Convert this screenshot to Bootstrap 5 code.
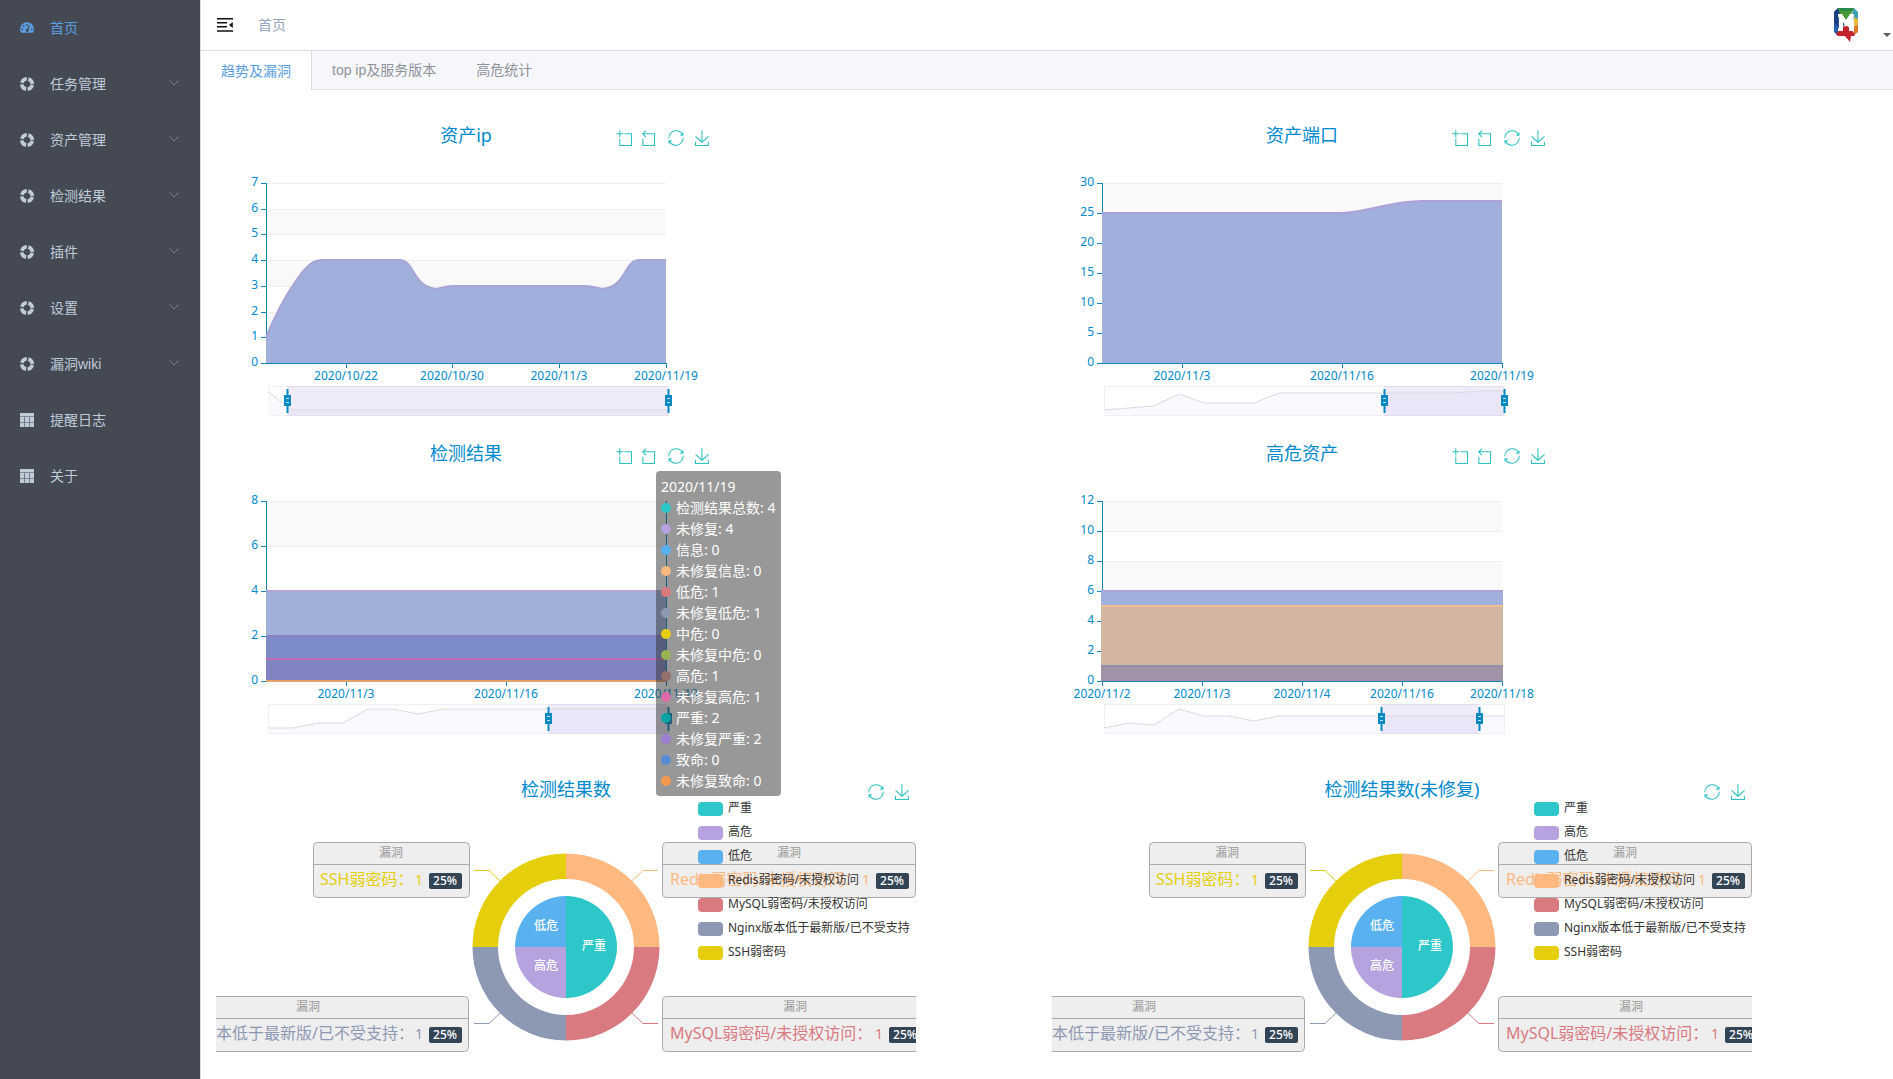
<!DOCTYPE html>
<html lang="zh-CN">
<head>
<meta charset="utf-8">
<meta name="viewport" content="width=device-width, initial-scale=1">
<title>首页</title>
<link href="https://cdn.jsdelivr.net/npm/bootstrap@5.3.0/dist/css/bootstrap.min.css" rel="stylesheet">
<style>
body{font-family:"Noto Sans","Noto Sans CJK SC",sans-serif;font-size:14px;line-height:20px;background:#fff}
.side,.tabbar,.crumb{font-family:"Liberation Sans","Noto Sans CJK SC",sans-serif}
.side{width:200px;background:#444953}
.side .nav-link{height:56px;padding:0 20px;color:#bfcbd9;gap:16px}
.side .nav-link.active{color:#5a9ee0}
.side .nav-link svg{width:14px;height:14px;flex:none}
.side .nav-link .chev{width:10px;height:6px;color:#7d828b;margin:0 1px 2px auto}
.main-col{border-left:1px solid #d8dce5;min-width:0}
.topbar{height:50px;padding:0 2px 0 16px}
.crumb{color:#97a8be;text-decoration:none;margin-left:25px}
.tabbar{height:40px;background:#f5f7fb;border-top:1px solid #d8dce5;border-bottom:1px solid #dfe4ed}
.tabbar button{border:0;background:none;padding:0 20px;color:#909399}
.tabbar .active{background:#fff;color:#5a9ee0;border-right:1px solid #d8dce5;height:39px}
.boards{padding:33px 5px 0 15px}
.board{max-width:500px;margin-bottom:18px}
.board-wide{max-width:700px}
.board-last{margin:18px 0 0}
.board-head{height:24px}
.board-head h2{font-size:18px;line-height:24px;color:#008acd;font-weight:400;margin:0}
.tools{flex:1 1 0;padding:7px 6px 0 0;gap:10px}
.tools button{border:0;background:none;padding:0;width:16px;height:16px;display:flex;color:#2ebfc0}
.tools svg{width:16px;height:16px}
.side-gap{flex:1 1 0;padding-left:6px}
.plot{display:block;width:100%;height:auto}
.plot text{font-size:12px}
.plot .axis{fill:#008acd}
.plot .big{font-size:16px}
.plot .num{font-size:14px}
.tip{left:440px;top:30px;width:125px;padding:5px;background:rgba(50,50,50,.5);color:#fff;line-height:21px;border-radius:4px;white-space:nowrap;z-index:5}
.tip i{display:inline-block;width:10px;height:10px;border-radius:50%;margin-right:5px}
.bg0{background:#2ec7c9}.bg1{background:#b6a2de}.bg2{background:#5ab1ef}.bg3{background:#ffb980}.bg4{background:#d87a80}.bg5{background:#8d98b3}.bg6{background:#e5cf0d}.bg7{background:#97b552}.bg8{background:#95706d}.bg9{background:#dc69aa}.bg10{background:#07a2a4}.bg11{background:#9a7fd1}.bg12{background:#588dd5}.bg13{background:#f5994e}
</style>
<script src="https://cdn.jsdelivr.net/npm/bootstrap@5.3.0/dist/js/bootstrap.bundle.min.js"></script>
</head>
<body>
<svg class="d-none" aria-hidden="true">
  <symbol id="i-gauge" viewBox="0 0 14 14"><path fill="currentColor" fill-rule="evenodd" d="M0 8.200a7 6.900 0 0 1 14 0c0 1.400-.4 2.600-1 3.600H1C.4 10.800 0 9.600 0 8.200zM6.200 2.900h1.600v1.500H6.200zM2.900 4.300h1.500v1.500H2.900zM1.500 7.600H3v1.500H1.500zM11 7.600h1.500v1.500H11zM9 4l1 .4-1.700 4a1.500 1.500 0 1 1-1.200-.4z"/></symbol>
  <symbol id="i-help" viewBox="0 0 14 14"><circle cx="7" cy="7" r="5.200" fill="none" stroke="currentColor" stroke-width="3.600" stroke-dasharray="6.570 1.600" stroke-dashoffset="-.8"/></symbol>
  <symbol id="i-table" viewBox="0 0 14 14"><path fill="currentColor" d="M0 0h14v3.400H0zM0 4h4.400v5H0zM5 4h4v5H5zM9.600 4H14v5H9.600zM0 9.500h4.400V14H0zM5 9.500h4V14H5zM9.600 9.500H14V14H9.600z"/></symbol>
  <symbol id="i-chev" viewBox="0 0 10 6"><path fill="none" stroke="currentColor" d="M.5.5 5 5 9.500.5"/></symbol>
  <symbol id="t-zoom" viewBox="-1 -1 61 61"><path d="M0,13.5h26.9 M13.5,26.9V0 M32.1,13.5H58V58H13.5 V32.1" fill="none" stroke="currentColor" stroke-width="4"/></symbol>
  <symbol id="t-back" viewBox="7 -1 61 61"><path d="M22,1.4L9.9,13.5l12.3,12.3 M10.3,13.5H54.9v44.6 H10.3v-26" fill="none" stroke="currentColor" stroke-width="4"/></symbol>
  <symbol id="t-restore" viewBox="-1 -1 62 62"><path d="M47,18.9h9.8V8.7 M56.3,20.1 C52.1,9,40.5,0.6,26.8,2.1C12.6,3.7,1.6,16.2,2.1,30.6 M13,41.1H3.1v10.2 M3.7,39.9c4.2,11.1,15.8,19.5,29.5,18 c14.2-1.6,25.2-14.1,24.7-28.5" fill="none" stroke="currentColor" stroke-width="4"/></symbol>
  <symbol id="t-save" viewBox="-1 -1 61 61"><path d="M4.7,22.9L29.3,45.5L54.7,23.4M4.6,43.6L4.6,58L53.8,58L53.8,43.6M29.2,45.1L29.2,0" fill="none" stroke="currentColor" stroke-width="4"/></symbol>
</svg>

<div class="d-flex min-vh-100">
  <nav class="side flex-shrink-0 nav flex-column flex-nowrap" aria-label="主菜单">
    <a href="#" class="nav-link active d-flex align-items-center"><svg><use href="#i-gauge"/></svg>首页</a>
    <a href="#" class="nav-link d-flex align-items-center"><svg><use href="#i-help"/></svg>任务管理<svg class="chev"><use href="#i-chev"/></svg></a>
    <a href="#" class="nav-link d-flex align-items-center"><svg><use href="#i-help"/></svg>资产管理<svg class="chev"><use href="#i-chev"/></svg></a>
    <a href="#" class="nav-link d-flex align-items-center"><svg><use href="#i-help"/></svg>检测结果<svg class="chev"><use href="#i-chev"/></svg></a>
    <a href="#" class="nav-link d-flex align-items-center"><svg><use href="#i-help"/></svg>插件<svg class="chev"><use href="#i-chev"/></svg></a>
    <a href="#" class="nav-link d-flex align-items-center"><svg><use href="#i-help"/></svg>设置<svg class="chev"><use href="#i-chev"/></svg></a>
    <a href="#" class="nav-link d-flex align-items-center"><svg><use href="#i-help"/></svg>漏洞wiki<svg class="chev"><use href="#i-chev"/></svg></a>
    <a href="#" class="nav-link d-flex align-items-center"><svg><use href="#i-table"/></svg>提醒日志</a>
    <a href="#" class="nav-link d-flex align-items-center"><svg><use href="#i-table"/></svg>关于</a>
  </nav>

  <div class="main-col flex-grow-1">
    <header class="topbar d-flex align-items-center">
      <button class="btn p-0 border-0 d-flex" aria-label="折叠菜单">
        <svg width="16" height="16" viewBox="0 0 16 16"><path fill="#111" d="M0 1h16v1.500H0zM0 5h10v1.500H0zM0 9h10v1.500H0zM0 13.300h16v1.500H0zM15.800 5v6L12 8z"/></svg>
      </button>
      <a class="crumb" href="#">首页</a>
      <button class="btn p-0 border-0 d-flex align-items-end ms-auto" aria-label="用户菜单">
        <svg width="26" height="34" viewBox="0 0 26 34">
          <path fill="#2a5fae" d="M5 0 1 4v20l4 4 8-14z"/>
          <path fill="#1d3f80" d="M1 4l4-4 2 7-2 2v9l-4-3z"/>
          <path fill="#4a9a34" d="M5 0h16l-3 6-5 7-6-7z"/>
          <path fill="#2c8a4a" d="M5 0h16l-1 3H7z"/>
          <path fill="#3c9fb5" d="M21 0l4 4v9l-4-1-2-7z"/>
          <path fill="#e6b93a" d="M21 9l4 2v8l-4 2z"/>
          <path fill="#e0762a" d="M21 19l4-2v7l-4 3z"/>
          <path fill="#c3232b" d="M3 26l4-5 6-4 6 5 3 5-1 1h-3l-1 6-5-6H5z"/>
          <path fill="#fff" d="M5 23v-3h1V9H5V6h4l4 6 4-6h4v3h-1v11h1v3h-5v-9l-3 5-3-5v9z"/>
        </svg>
        <svg class="ms-4" width="8" height="10" viewBox="0 0 8 10"><path fill="#5a5e66" d="M0 1h8L4 5z"/></svg>
      </button>
    </header>
    <div class="tabbar d-flex" role="tablist">
      <button class="active" role="tab" aria-selected="true">趋势及漏洞</button>
      <button role="tab">top ip及服务版本</button>
      <button role="tab">高危统计</button>
    </div>

    <main class="boards">
      <div class="row g-0">
        <section class="col-6"><div class="board" data-chart="ip"></div></section>
        <section class="col-6"><div class="board" data-chart="port"></div></section>
        <section class="col-6">
          <div class="board position-relative" data-chart="result">
            <div class="tip position-absolute" role="tooltip">2020/11/19<br>
              <i class="bg0"></i>检测结果总数: 4<br><i class="bg1"></i>未修复: 4<br><i class="bg2"></i>信息: 0<br><i class="bg3"></i>未修复信息: 0<br><i class="bg4"></i>低危: 1<br><i class="bg5"></i>未修复低危: 1<br><i class="bg6"></i>中危: 0<br><i class="bg7"></i>未修复中危: 0<br><i class="bg8"></i>高危: 1<br><i class="bg9"></i>未修复高危: 1<br><i class="bg10"></i>严重: 2<br><i class="bg11"></i>未修复严重: 2<br><i class="bg12"></i>致命: 0<br><i class="bg13"></i>未修复致命: 0
            </div>
          </div>
        </section>
        <section class="col-6"><div class="board" data-chart="asset"></div></section>
        <section class="col-6"><div class="board board-wide board-last" data-chart="pieAll"></div></section>
        <section class="col-6"><div class="board board-wide board-last" data-chart="pieOpen"></div></section>
      </div>
    </main>
  </div>
</div>

<script>
// Plot area of a trend chart: 400 x 180, inset 50 from the left and 60 from the top.
const trends = {
  ip: {title: '资产ip', max: 7, step: 1, ticks: [[80, '2020/10/22'], [186, '2020/10/30'], [293, '2020/11/3'], [400, '2020/11/19']],
    bands: [['M0,154.3 C0,154.3 13.3,122 26.7,102.9 C38,85 46,77.1 56,77.1 H133.3 C146.7,77.1 146.7,96.4 160,102.9 C173.3,109.3 173.3,102.9 186.7,102.9 H320 C333.3,102.9 333.3,109.3 346.7,102.9 C360,96.4 360,77.1 373.3,77.1 H400', '#a0afdb', '#a8a5d6']],
    zoom: [19, 400], shadow: '0,6 19,20 25,24 400,24'},
  port: {title: '资产端口', max: 30, step: 5, ticks: [[80, '2020/11/3'], [240, '2020/11/16'], [400, '2020/11/19']],
    bands: [['M0,30 H240 C265,29 290,18 320,18 H400', '#a0afdb', '#aea0d6']],
    zoom: [280, 400], shadow: '0,24 25,22 50,20 75,8 100,17 125,17 150,17 175,7 350,7 375,5 400,5'},
  result: {title: '检测结果', max: 8, step: 2, ticks: [[80, '2020/11/3'], [240, '2020/11/16'], [400, '2020/11/19']],
    bands: [['M0,90 H400', '#a0b0db', '#b1a3da'], ['M0,135 H400', '#7d8bc9', '#8b7dc2'], ['M0,158 H400', '#8084c0', '#c06bad'], ['M0,180 H400', '#8084c0', '#e0a068']],
    pointer: true, zoom: [280, 400], shadow: '0,24 25,24 50,19 75,19 100,5 125,5 150,10 175,5 400,5'},
  asset: {title: '高危资产', max: 12, step: 2, ticks: [[0, '2020/11/2'], [100, '2020/11/3'], [200, '2020/11/4'], [300, '2020/11/16'], [400, '2020/11/18']],
    bands: [['M-1,90 H401', '#a0afdb', '#a8a5d6'], ['M-1,105 H401', '#d2b6a1', '#f0bd92'], ['M-1,165 H401', '#a292a8', '#9090ae']],
    zoom: [277, 375], shadow: '0,24 25,19 50,21 75,5 100,12 125,12 150,17 175,12 400,12'}
};

const toolLabels = {zoom: '区域缩放', back: '区域缩放还原', restore: '还原', save: '保存为图片'};
const head = (title, tools) => `<div class="board-head d-flex align-items-start"><div class="side-gap"></div><h2>${title}</h2><div class="tools d-flex justify-content-end">${
  tools.map(t => `<button aria-label="${toolLabels[t]}"><svg><use href="#t-${t}"/></svg></button>`).join('')}</div></div>`;

function trendSvg(c) {
  let grid = '', labels = '', area = '', axis = '';
  const n = c.max / c.step, h = 180 / n;
  for (let i = 0; i <= n; i++) {
    const y = Math.round(180 - i * h);
    if (i < n && i % 2) grid += `<rect x="0" y="${180 - (i + 1) * h}" width="400" height="${h}" fill="#f9f9f9"/>`;
    if (i) grid += `<path d="M0,${y + .5}H400" stroke="#eee"/>`;
    axis += `<path d="M-5,${y + .5}H0"/>`;
    labels += `<text class="axis" x="-8" y="${y + 3}" text-anchor="end">${i * c.step}</text>`;
  }
  axis += '<path d="M.5,0V181"/><path d="M0,180.5H400"/>';
  c.bands.forEach(([d, fill, line]) => {
    area += `<path d="${d} V181 H${d.startsWith('M-1') ? -1 : 0}Z" fill="${fill}"/><path d="${d}" fill="none" stroke="${line}" stroke-width="2"/>`;
  });
  c.ticks.forEach(([x, t]) => {
    axis += `<path d="M${x + .5},180V185"/>`;
    labels += `<text class="axis" x="${x}" y="197" text-anchor="middle">${t}</text>`;
  });
  const [a, b] = c.zoom;
  const handle = x => `<g transform="translate(${x},0)"><path d="M.5,3V27" stroke="#0a88c0" stroke-width="2"/><rect x="-3" y="9" width="7" height="11" fill="#0a88c0"/><path d="M-1,12.5H2M-1,16.5H2" stroke="#bfe4f5"/></g>`;
  return `<svg class="plot" viewBox="0 24 500 276" role="img" aria-label="${c.title}"><g transform="translate(50,60)">
    ${grid}<g stroke="#1586b8">${axis}</g>${area}<path d="M0,180.5H400" stroke="${c.bands.length === 4 ? '#e0a068' : '#1586b8'}"/>
    ${c.pointer ? '<path d="M400.5,0V180" stroke="#008acd"/>' : ''}${labels}
    <g transform="translate(2,203)"><rect x=".5" y=".5" width="400" height="29" fill="#fff" stroke="#f0eef6"/>
    <polygon points="${c.shadow} 400,29 0,29" fill="#faf9fe"/><rect x="${a}" y="0" width="${b - a}" height="30" fill="#b6a2de" fill-opacity=".22"/>
    <polyline points="${c.shadow}" fill="none" stroke="#d9dae2"/>${handle(a)}${handle(b)}</g></g></svg>`;
}

function pieSvg(title) {
  const pt = (r, deg) => [350 + r * Math.sin(deg * Math.PI / 180), 170 - r * Math.cos(deg * Math.PI / 180)].join(',');
  const wedge = (r0, r1, a, b, f) => `<path fill="${f}" d="M${pt(r1, a)}A${r1},${r1} 0 0 1 ${pt(r1, b)}L${pt(r0, b)}${r0 ? `A${r0},${r0} 0 0 0 ${pt(r0, a)}` : ''}Z"/>`;
  const box = (x, w, y, tx, name, nx, anchor, ox, bx, color) => `
    <rect x="${x}.5" y="${y}.5" width="${w}" height="55" rx="4" fill="#eee" stroke="#aaa"/><path d="M${x},${y + 22}.5h${w}" stroke="#aaa"/>
    <text x="${tx}" y="${y + 15}" text-anchor="middle" fill="#999">漏洞</text>
    <text class="big" x="${nx}" y="${y + 43}" text-anchor="${anchor}" fill="${color}">${name}：</text>
    <text class="num" x="${ox}" y="${y + 43}" text-anchor="middle" fill="${color}">1</text>
    <rect x="${bx}" y="${y + 31}" width="33" height="16" rx="2" fill="#334455"/><text x="${bx + 16}" y="${y + 43}" text-anchor="middle" font-weight="500" fill="#fff">25%</text>`;
  const legend = [['严重', '#2ec7c9'], ['高危', '#b6a2de'], ['低危', '#5ab1ef'], ['Redis弱密码/未授权访问', '#ffb980'], ['MySQL弱密码/未授权访问', '#d87a80'], ['Nginx版本低于最新版/已不受支持', '#8d98b3'], ['SSH弱密码', '#e5cf0d']];
  return `<svg class="plot" viewBox="0 24 700 276" role="img" aria-label="${title}">
    ${wedge(68, 93.5, 0, 90, '#ffb980')}${wedge(68, 93.5, 90, 180, '#d87a80')}${wedge(68, 93.5, 180, 270, '#8d98b3')}${wedge(68, 93.5, 270, 360, '#e5cf0d')}
    ${wedge(0, 51, 0, 180, '#2ec7c9')}${wedge(0, 51, 180, 270, '#b6a2de')}${wedge(0, 51, 270, 360, '#5ab1ef')}
    <g fill="#fff" text-anchor="middle" font-weight="500"><text x="330" y="153">低危</text><text x="330" y="193">高危</text><text x="378" y="173">严重</text></g>
    <g fill="none"><path d="M258,93.5H273L284,104" stroke="#e5cf0d"/><path d="M442,93.5H427L416,104" stroke="#ffb980"/><path d="M258,246.5H273L284,236" stroke="#8d98b3"/><path d="M442,246.5H427L416,236" stroke="#d87a80"/></g>
    ${box(97, 156, 65, 175, 'SSH弱密码', 104, 'start', 203, 213, '#e5cf0d')}
    ${box(446, 253, 65, 573, 'Redis弱密码/未授权访问', 454, 'start', 650, 660, '#ffb980')}
    ${box(-70, 323, 219, 92, 'Nginx版本低于最新版/已不受支持', 198, 'end', 203, 213, '#8d98b3')}
    ${box(446, 266, 219, 579, 'MySQL弱密码/未授权访问', 454, 'start', 663, 673, '#d87a80')}
    ${legend.map(([t, f], i) => `<rect x="482" y="${25 + i * 24}" width="25" height="14" rx="4" fill="${f}"/><text x="512" y="${35 + i * 24}" fill="#333">${t}</text>`).join('')}
  </svg>`;
}

document.querySelectorAll('[data-chart]').forEach(el => {
  const key = el.dataset.chart, c = trends[key];
  const title = key === 'pieAll' ? '检测结果数' : '检测结果数(未修复)';
  el.insertAdjacentHTML('afterbegin', c
    ? head(c.title, ['zoom', 'back', 'restore', 'save']) + trendSvg(c)
    : head(title, ['restore', 'save']) + pieSvg(title));
});
</script>
</body>
</html>
